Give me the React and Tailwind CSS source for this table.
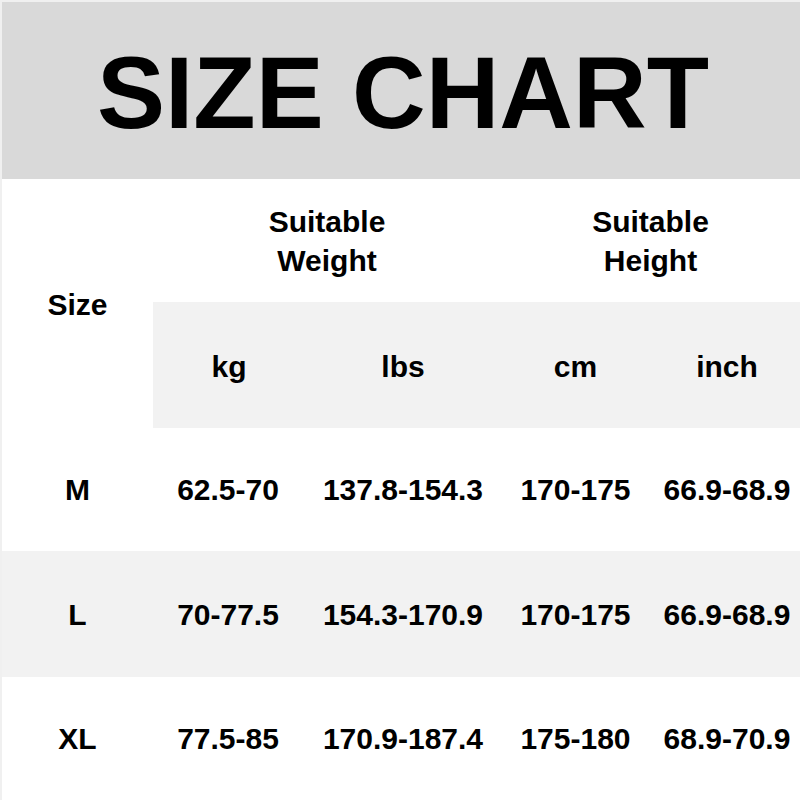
export default function App() {
  const font = { fontFamily: '"Liberation Sans", Arial, sans-serif' };
  const cell = "flex items-center justify-center text-[30px] font-bold text-black leading-[39px] text-center";
  const gray = "bg-[#f2f2f2]";
  const rows = [
    ["M", "62.5-70", "137.8-154.3", "170-175", "66.9-68.9", false],
    ["L", "70-77.5", "154.3-170.9", "170-175", "66.9-68.9", true],
    ["XL", "77.5-85", "170.9-187.4", "175-180", "68.9-70.9", false],
  ];
  return (
    <div className="w-[800px] h-[800px] bg-white overflow-hidden border-t-2 border-l-2 border-[#f0f0f0]" style={font}>
      <div className="h-[177px] bg-[#d9d9d9] flex items-center justify-center pt-[5px] pl-[4px]">
        <span className="text-[102px] font-bold leading-none text-black">SIZE CHART</span>
      </div>
      <div className="mt-[1px] grid grid-cols-[151px_152px_196px_149px_150px] grid-rows-[122px_126px_123px_126px_123px]">
        <div className={`${cell} row-span-2`}>Size</div>
        <div className={`${cell} col-span-2`}>Suitable<br />Weight</div>
        <div className={`${cell} col-span-2`}>Suitable<br />Height</div>
        <div className={`${cell} ${gray} pt-[3px]`}>kg</div>
        <div className={`${cell} ${gray} pt-[3px]`}>lbs</div>
        <div className={`${cell} ${gray} pt-[3px]`}>cm</div>
        <div className={`${cell} ${gray} pt-[3px] pl-[4px]`}>inch</div>
        {rows.map((r) => (
          <>
            <div key={r[0] + "a"} className={`${cell} ${r[5] ? gray : ""}`}>{r[0]}</div>
            <div key={r[0] + "b"} className={`${cell} ${r[5] ? gray : ""} pr-[2px]`}>{r[1]}</div>
            <div key={r[0] + "c"} className={`${cell} ${r[5] ? gray : ""}`}>{r[2]}</div>
            <div key={r[0] + "d"} className={`${cell} ${r[5] ? gray : ""}`}>{r[3]}</div>
            <div key={r[0] + "e"} className={`${cell} ${r[5] ? gray : ""} pl-[4px]`}>{r[4]}</div>
          </>
        ))}
      </div>
    </div>
  );
}
